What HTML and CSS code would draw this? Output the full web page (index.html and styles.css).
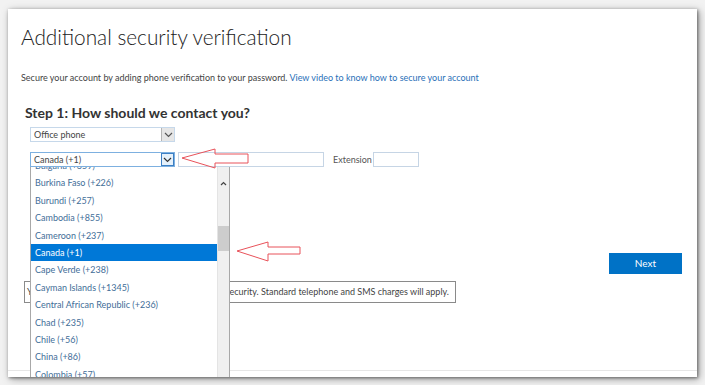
FILE: index.html
```html
<!DOCTYPE html>
<html>
<head>
<meta charset="utf-8">
<link rel="stylesheet" href="styles.css">
</head>
<body>
<div class="window">
  <div class="content">
    <h1 class="title">Additional security verification</h1>
    <p class="intro">Secure your account by adding phone verification to your password. <a class="link">View video to know how to secure your account</a></p>
    <h2 class="step">Step 1: How should we contact you?</h2>
    <div class="field-row">
      <div class="select">
        <span class="select-text">Office phone</span>
        <span class="select-btn"><svg width="9" height="6" viewBox="0 0 9 6"><path d="M1 1l3.5 3.5L8 1" fill="none" stroke="#555" stroke-width="1.2"/></svg></span>
      </div>
    </div>
    <div class="field-row country-row">
      <div class="country-wrap">
        <div class="select focused">
          <span class="select-text">Canada (+1)</span>
          <span class="select-btn"><svg width="9" height="6" viewBox="0 0 9 6"><path d="M1 1l3.5 3.5L8 1" fill="none" stroke="#333" stroke-width="1.2"/></svg></span>
        </div>
        <div class="dropdown">
          <ul class="options">
            <li class="opt">Bulgaria (+359)</li>
            <li class="opt">Burkina Faso (+226)</li>
            <li class="opt">Burundi (+257)</li>
            <li class="opt">Cambodia (+855)</li>
            <li class="opt">Cameroon (+237)</li>
            <li class="opt selected">Canada (+1)</li>
            <li class="opt">Cape Verde (+238)</li>
            <li class="opt">Cayman Islands (+1345)</li>
            <li class="opt">Central African Republic (+236)</li>
            <li class="opt">Chad (+235)</li>
            <li class="opt">Chile (+56)</li>
            <li class="opt">China (+86)</li>
            <li class="opt">Colombia (+57)</li>
          </ul>
          <div class="scrollbar">
            <span class="scroll-up"><svg width="7" height="5" viewBox="0 0 7 5"><path d="M1 4l2.5-2.5L6 4" fill="none" stroke="#444" stroke-width="1.2"/></svg></span>
            <span class="thumb"></span>
          </div>
        </div>
      </div>
      <div class="input phone"></div>
      <span class="ext-label">Extension</span>
      <div class="input ext"></div>
    </div>
    <div class="actions">
      <div class="next">Next</div>
    </div>
    <div class="notice"><span class="notice-text">Your phone numbers will only be used for account security. Standard telephone and SMS charges will apply.</span></div>
  </div>
  <div class="footer-line"></div>
  <svg class="arrow arrow-1" width="72" height="24" viewBox="0 0 72 24"><path d="M1 10L34 1V6H67V15H34V20Z" fill="none" stroke="#e8525a" stroke-width="1"/></svg>
  <svg class="arrow arrow-2" width="68" height="24" viewBox="0 0 68 24"><path d="M1 10L32 1V6H64V13H32V20Z" fill="none" stroke="#e8525a" stroke-width="1"/></svg>
</div>
</body>
</html>
```

FILE: styles.css
```css
* { box-sizing: border-box; }
html, body { margin: 0; padding: 0; }
body {
  width: 705px;
  height: 385px;
  overflow: hidden;
  background: #f2f2f2;
  font-family: Lato, "Open Sans", sans-serif;
  padding: 9px 8px 8px 8px;
}
.window {
  position: relative;
  width: 689px;
  height: 368px;
  background: #fff;
  box-shadow: 1px 1px 3px rgba(0,0,0,0.45), 2px 2px 8px rgba(0,0,0,0.35);
  overflow: hidden;
}
.content {
  padding: 0 0 0 13px;
}
.title {
  margin: 0;
  padding-top: 15px;
  font-size: 20.8px;
  line-height: 25px;
  font-weight: 300;
  color: #222;
}
.intro {
  margin: 22px 0 0 0;
  font-size: 9px;
  line-height: 14px;
  color: #444;
}
.link { color: #2a70b8; }
.step {
  margin: 19px 0 0 4px;
  font-size: 14px;
  line-height: 17px;
  font-weight: 700;
  color: #333;
}
.field-row {
  display: flex;
  align-items: center;
  margin: 6px 0 0 9px;
}
.country-row { margin-top: 10px; }
.country-wrap { position: relative; }
.select {
  width: 145px;
  height: 15px;
  border: 1px solid #c6d8ea;
  display: flex;
  align-items: stretch;
  background: #fff;
}
.select-text {
  flex: 1;
  font-size: 9px;
  line-height: 13px;
  padding-left: 3px;
  color: #444;
}
.select-btn {
  width: 13px;
  background: #e6e6e6;
  border-left: 1px solid #b4b4b4;
  display: flex;
  align-items: center;
  justify-content: center;
}
.select.focused { border-color: #7db0e0; }
.select.focused .select-btn {
  background: #e5f1fb;
  border: 1px solid #3c7fc4;
}
.input {
  height: 15px;
  border: 1px solid #c6d5e5;
  background: #fff;
}
.phone { width: 146px; margin-left: 3px; }
.ext-label {
  font-size: 9px;
  color: #555;
  margin-left: 9px;
}
.ext { width: 46px; margin-left: 1px; }
.dropdown {
  position: absolute;
  left: 0;
  top: 15px;
  width: 200px;
  height: 240px;
  background: #fff;
  border: 1px solid #a8a8a8;
  border-top: none;
  display: flex;
  overflow: hidden;
  z-index: 5;
}
.options {
  list-style: none;
  margin: -10px 0 0 0;
  padding: 0;
  flex: 1;
}
.opt {
  height: 17.4px;
  line-height: 17.4px;
  font-size: 9px;
  padding-left: 4px;
  color: #3f6e98;
  white-space: nowrap;
}
.opt.selected {
  background: #0078d7;
  color: #fff;
}
.scrollbar {
  width: 12px;
  background: #f0f0f0;
  position: relative;
  border-left: 1px solid #e4e4e4;
}
.scroll-up {
  position: absolute;
  top: 3px;
  left: 2px;
}
.thumb {
  position: absolute;
  left: 0;
  width: 11px;
  top: 59px;
  height: 25px;
  background: #cdcdcd;
}
.actions {
  display: flex;
  justify-content: flex-end;
  margin-top: 86px;
  padding-right: 15px;
}
.next {
  width: 73px;
  height: 21px;
  background: #0072c6;
  color: #fff;
  font-size: 10px;
  line-height: 21px;
  text-align: center;
}
.notice {
  margin: 7px 0 0 3px;
  width: 432px;
  height: 22px;
  border: 1px solid #8a8a8a;
  display: flex;
  align-items: center;
  justify-content: flex-end;
  padding: 0 6px 0 4px;
  overflow: hidden;
}
.notice-text {
  font-size: 9px;
  line-height: 20px;
  color: #444;
  white-space: nowrap;
}
.footer-line {
  position: absolute;
  left: 0;
  right: 0;
  top: 361px;
  height: 1px;
  background: #e6e6e6;
}
.arrow { position: absolute; z-index: 6; }
.arrow-1 { left: 173px; top: 139px; }
.arrow-2 { left: 228px; top: 232px; }
```
